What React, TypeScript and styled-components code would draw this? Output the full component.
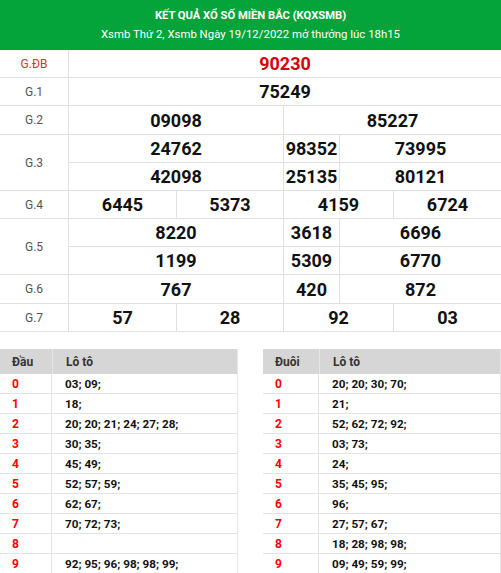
import React from "react";
import styled, { createGlobalStyle } from "styled-components";

const Global = createGlobalStyle`
  html, body { margin: 0; padding: 0; background: #fff; }
  body { font-family: Roboto, "Liberation Sans", Arial, sans-serif; }
  * { box-sizing: border-box; }
`;

const Page = styled.div`
  width: 501px;
`;

const Header = styled.div`
  background: #04a43a;
  color: #fff;
  height: 50px;
  display: flex;
  flex-direction: column;
  align-items: center;
  justify-content: center;
  gap: 4px;
`;

const Title = styled.div`
  font-size: 11.2px;
  font-weight: 700;
  line-height: 14px;
`;

const Sub = styled.div`
  font-size: 11.4px;
  line-height: 14px;
`;

const Grid = styled.div`
  display: grid;
  grid-template-columns: 69px 108px 107px 56px 54px 107px;
  grid-template-rows: 28px 28px 29px 28px 28px 28px 28px 28px 29px 28px;
`;

const Label = styled.div<{ $rows?: number; $red?: boolean }>`
  grid-column: 1;
  grid-row: span ${(p) => p.$rows ?? 1};
  display: flex;
  align-items: center;
  justify-content: center;
  font-size: 12px;
  color: ${(p) => (p.$red ? "#e0302b" : "#555")};
  border-right: 1px solid #e0e0e0;
  border-bottom: 1px solid #e0e0e0;
`;

const Num = styled.div<{ $from: number; $to: number; $red?: boolean }>`
  grid-column: ${(p) => p.$from} / ${(p) => p.$to};
  display: flex;
  align-items: center;
  justify-content: center;
  font-size: 18px;
  font-weight: 700;
  color: ${(p) => (p.$red ? "#d9000d" : "#111")};
  border-right: ${(p) => (p.$to === 7 ? "none" : "1px solid #e0e0e0")};
  border-bottom: 1px solid #e0e0e0;
`;

const LotoWrap = styled.div`
  margin-top: 17px;
  display: flex;
  justify-content: space-between;
`;

const Loto = styled.div<{ $first: number }>`
  width: 238px;
  display: grid;
  grid-template-columns: ${(p) => p.$first}px 1fr;
  grid-template-rows: 25px;
  grid-auto-rows: 20px;
  border-right: 1px solid #e6e6e6;
`;

const LHead = styled.div`
  background: #d6d6d6;
  color: #333;
  font-size: 12px;
  font-weight: 700;
  display: flex;
  align-items: center;
  padding-left: 12px;
  & + & { border-left: 1px solid #e6e6e6; padding-left: 13px; }
`;

const LKey = styled.div`
  color: #ff0000;
  font-size: 12px;
  font-weight: 700;
  display: flex;
  align-items: center;
  padding-left: 12px;
  border-bottom: 1px solid #e3e3e3;
  border-right: 1px solid #e3e3e3;
`;

const LVal = styled.div`
  color: #111;
  font-size: 11.7px;
  font-weight: 700;
  display: flex;
  align-items: center;
  padding-left: 13px;
  border-bottom: 1px solid #e3e3e3;
`;

const dau = [
  "03; 09;",
  "18;",
  "20; 20; 21; 24; 27; 28;",
  "30; 35;",
  "45; 49;",
  "52; 57; 59;",
  "62; 67;",
  "70; 72; 73;",
  "",
  "92; 95; 96; 98; 98; 99;",
];
const duoi = [
  "20; 20; 30; 70;",
  "21;",
  "52; 62; 72; 92;",
  "03; 73;",
  "24;",
  "35; 45; 95;",
  "96;",
  "27; 57; 67;",
  "18; 28; 98; 98;",
  "09; 49; 59; 99;",
];

const three = (a: string, b: string, c: string) => (
  <>
    <Num $from={2} $to={4}>{a}</Num>
    <Num $from={4} $to={5}>{b}</Num>
    <Num $from={5} $to={7}>{c}</Num>
  </>
);
const four = (a: string, b: string, c: string, d: string) => (
  <>
    <Num $from={2} $to={3}>{a}</Num>
    <Num $from={3} $to={4}>{b}</Num>
    <Num $from={4} $to={6}>{c}</Num>
    <Num $from={6} $to={7}>{d}</Num>
  </>
);

const LotoTable = ({ head, first, data }: { head: string; first: number; data: string[] }) => (
  <Loto $first={first}>
    <LHead>{head}</LHead>
    <LHead>Lô tô</LHead>
    {data.map((v, i) => (
      <React.Fragment key={i}>
        <LKey>{i}</LKey>
        <LVal>{v}</LVal>
      </React.Fragment>
    ))}
  </Loto>
);

export default function App() {
  return (
    <Page>
      <Global />
      <Header>
        <Title>KẾT QUẢ XỔ SỐ MIỀN BẮC (KQXSMB)</Title>
        <Sub>Xsmb Thứ 2, Xsmb Ngày 19/12/2022 mở thưởng lúc 18h15</Sub>
      </Header>
      <Grid>
        <Label $red>G.ĐB</Label>
        <Num $from={2} $to={7} $red>90230</Num>
        <Label>G.1</Label>
        <Num $from={2} $to={7}>75249</Num>
        <Label>G.2</Label>
        <Num $from={2} $to={4}>09098</Num>
        <Num $from={4} $to={7}>85227</Num>
        <Label $rows={2}>G.3</Label>
        {three("24762", "98352", "73995")}
        {three("42098", "25135", "80121")}
        <Label>G.4</Label>
        {four("6445", "5373", "4159", "6724")}
        <Label $rows={2}>G.5</Label>
        {three("8220", "3618", "6696")}
        {three("1199", "5309", "6770")}
        <Label>G.6</Label>
        {three("767", "420", "872")}
        <Label>G.7</Label>
        {four("57", "28", "92", "03")}
      </Grid>
      <LotoWrap>
        <LotoTable head="Đầu" first={52} data={dau} />
        <LotoTable head="Đuôi" first={56} data={duoi} />
      </LotoWrap>
    </Page>
  );
}
